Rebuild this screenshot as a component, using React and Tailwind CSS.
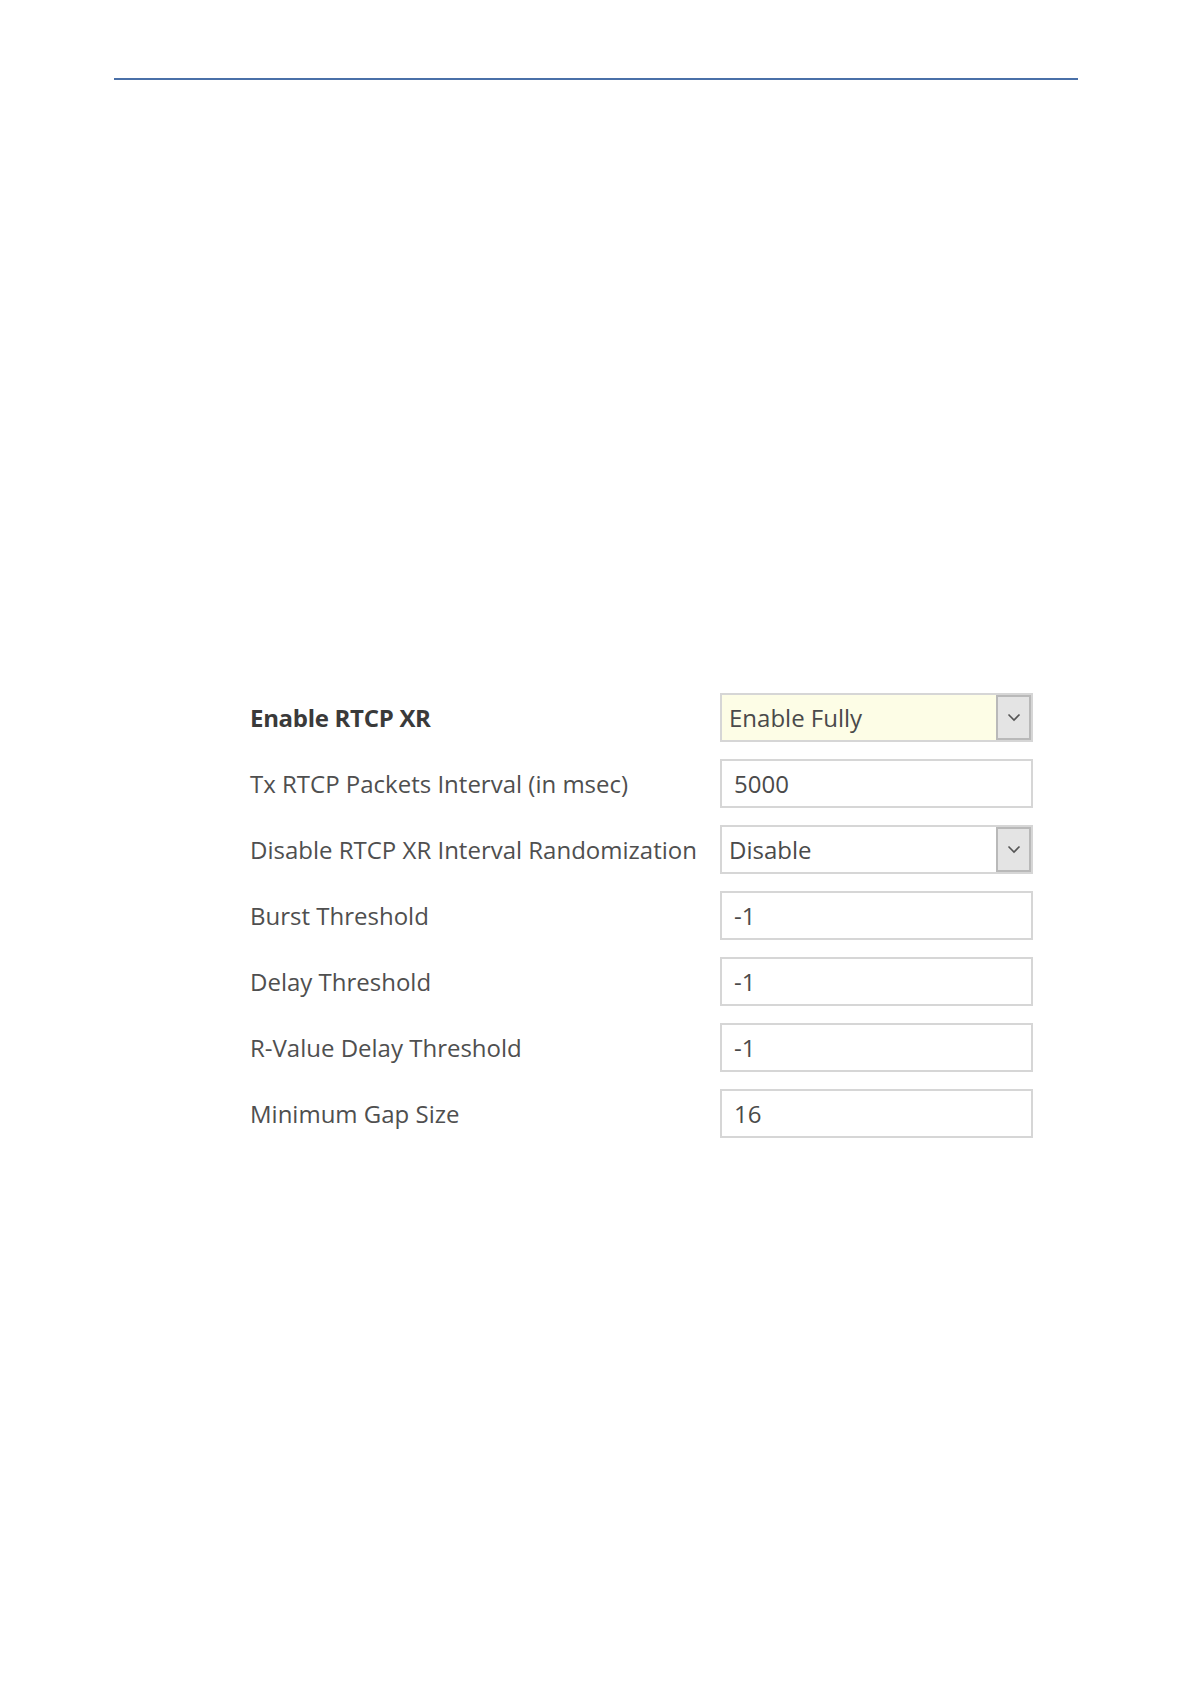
import React from 'react'

const rows = [
  { label: 'Enable RTCP XR', value: 'Enable Fully', select: true, bold: true, tint: true },
  { label: 'Tx RTCP Packets Interval (in msec)', value: '5000' },
  { label: 'Disable RTCP XR Interval Randomization', value: 'Disable', select: true },
  { label: 'Burst Threshold', value: '-1' },
  { label: 'Delay Threshold', value: '-1' },
  { label: 'R-Value Delay Threshold', value: '-1' },
  { label: 'Minimum Gap Size', value: '16' },
]

function Chevron() {
  return (
    <svg width="14" height="9" viewBox="0 0 14 9" fill="none">
      <path d="M1.5 1.5 L7 7 L12.5 1.5" stroke="#555" strokeWidth="1.6" />
    </svg>
  )
}

function Field({ row }) {
  if (row.select) {
    return (
      <div
        className={`flex h-[49px] w-[313px] items-stretch border-2 border-[#d6d6d6] ${
          row.tint ? 'bg-[#fdfde6]' : 'bg-white'
        }`}
      >
        <span className="flex flex-1 items-center pl-[7px] text-[#4a4a4a]">{row.value}</span>
        <span className="flex w-[35px] items-center justify-center border-2 border-[#b9b9b9] bg-[#e4e4e4]">
          <Chevron />
        </span>
      </div>
    )
  }
  return (
    <div className="flex h-[49px] w-[313px] items-center border-2 border-[#d6d6d6] bg-white pl-[12px] text-[#4a4a4a]">
      {row.value}
    </div>
  )
}

export default function App() {
  return (
    <div className="min-h-[1684px] w-[1191px] bg-white" style={{ fontFamily: '"Open Sans", "Noto Sans", sans-serif' }}>
      <div className="ml-[114px] mr-[113px] pt-[78px]">
        <div className="h-[2px] bg-[#4a70a8]" />
      </div>
      <div className="mt-[613px] flex flex-col gap-[17px] pl-[250px] text-[24px]">
        {rows.map((row) => (
          <div key={row.label} className="flex items-center">
            <div
              className={`w-[470px] ${
                row.bold ? 'font-bold text-[#3a3a3a] tracking-[-0.3px]' : 'text-[#4f4f4f]'
              }`}
            >
              {row.label}
            </div>
            <Field row={row} />
          </div>
        ))}
      </div>
    </div>
  )
}
